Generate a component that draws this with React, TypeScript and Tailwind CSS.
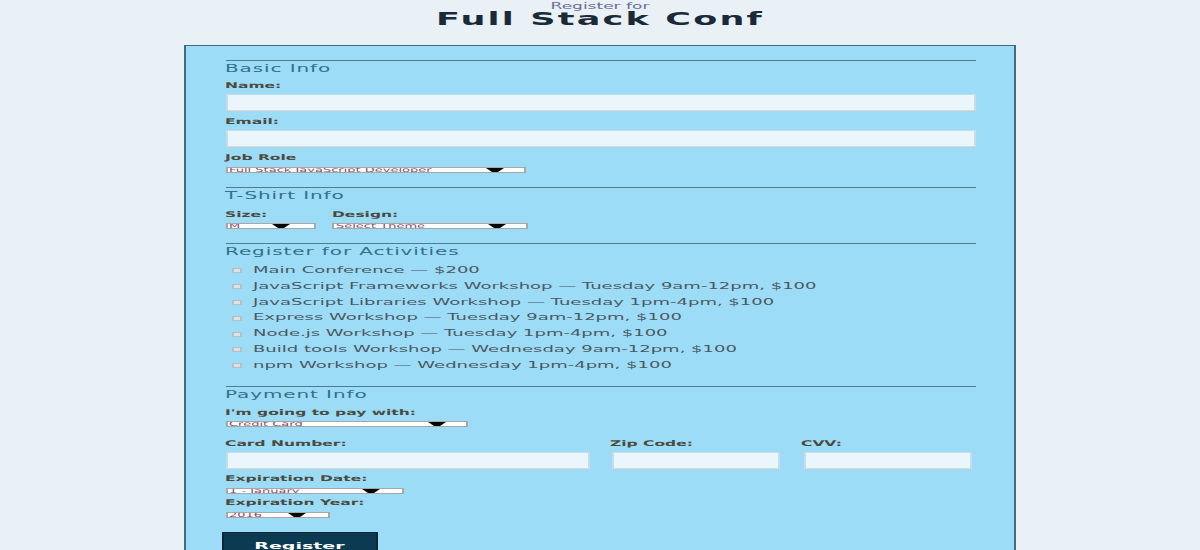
import React from "react";

const activities = [
  "Main Conference — $200",
  "JavaScript Frameworks Workshop — Tuesday 9am-12pm, $100",
  "JavaScript Libraries Workshop — Tuesday 1pm-4pm, $100",
  "Express Workshop — Tuesday 9am-12pm, $100",
  "Node.js Workshop — Tuesday 1pm-4pm, $100",
  "Build tools Workshop — Wednesday 9am-12pm, $100",
  "npm Workshop — Wednesday 1pm-4pm, $100",
];

const Legend = ({ children }: { children: React.ReactNode }) => (
  <div className="border-t border-[#4f7d8f]">
    <div className="mt-[3.5px] h-[10px] text-[10px] leading-[10px] tracking-[0.45px] text-[#35708a]">
      {children}
    </div>
  </div>
);

const Label = ({ children, className = "" }: { children: React.ReactNode; className?: string }) => (
  <div className={`h-[8px] whitespace-nowrap text-[7.75px] font-bold leading-[8px] text-[#4a4a3e] ${className}`}>
    {children}
  </div>
);

const TextInput = ({ className = "" }: { className?: string }) => (
  <div className={`h-[17px] border border-[#c6dde7] bg-[#eaf6fc] shadow-[0_1px_0_#b9d3de] ${className}`} />
);

// tiny native-looking select: white box, clipped text, black arrow
const Select = ({ text, className = "", arrowClass = "mr-[10px]" }: { text: string; className?: string; arrowClass?: string }) => (
  <div className={`flex h-[6px] items-start overflow-hidden border border-[#a7a7a7] bg-white ${className}`}>
    <span className="mt-[-1px] whitespace-nowrap pl-[1px] text-[6.5px] leading-[6px] text-[#8b4a6b]">{text}</span>
    <svg viewBox="0 0 9 6" className={`ml-auto h-[6px] w-[9px] shrink-0 ${arrowClass}`}>
      <polygon points="0,0 9,0 4.5,6" fill="#000" />
    </svg>
  </div>
);

export default function App() {
  return (
    <div className="h-[550px] w-[1200px] overflow-hidden bg-[#e9f0f6]">
      <div className="w-[600px] origin-top-left scale-x-200 font-['DejaVu_Sans',sans-serif]">
        {/* header */}
        <div className="pt-[1.7px] text-center">
          <div className="h-[8.5px] text-[8.5px] leading-[8.5px] text-[#6a6e9c]">Register for</div>
          <h1 className="mt-[0.5px] h-[17.5px] text-[17.5px] font-bold leading-[17.5px] tracking-[1.1px] text-[#1b2a38]">
            Full Stack Conf
          </h1>
        </div>

        {/* form card */}
        <form className="mx-auto mt-[16.8px] h-[520px] w-[416px] border-t border-x-[1.5px] border-[#3e6c80] bg-[#9ddcf6] px-[19.5px] pt-[14px]">
          {/* Basic Info */}
          <Legend>Basic Info</Legend>
          <Label className="mt-[7.7px]">Name:</Label>
          <TextInput className="mt-[4px]" />
          <Label className="mt-[7px]">Email:</Label>
          <TextInput className="mt-[4px]" />
          <Label className="mt-[7px]">Job Role</Label>
          <Select className="mt-[4.5px] w-[150.5px]" text="Full Stack JavaScript Developer" />

          {/* T-Shirt Info */}
          <div className="mt-[14.3px]">
            <Legend>T-Shirt Info</Legend>
          </div>
          <div className="mt-[9.1px] flex">
            <div className="w-[53.5px]">
              <Label>Size:</Label>
              <Select className="mt-[4.7px] w-[45.5px]" text="M" arrowClass="mr-[12px]" />
            </div>
            <div>
              <Label>Design:</Label>
              <Select className="mt-[4.7px] w-[97.7px]" text="Select Theme" />
            </div>
          </div>

          {/* Activities */}
          <div className="mt-[13.4px]">
            <Legend>Register for Activities</Legend>
          </div>
          <div className="mt-[5.8px]">
            {activities.map((a) => (
              <div key={a} className="flex h-[15.83px] items-center">
                <span className="ml-[3px] h-[5px] w-[5px] shrink-0 border-[0.5px] border-[#b7bec4] bg-[#dde1e4]" />
                <span className="ml-[6px] whitespace-nowrap text-[9px] leading-[15.83px] text-[#4a5962]">{a}</span>
              </div>
            ))}
          </div>

          {/* Payment Info */}
          <div className="mt-[12.2px]">
            <Legend>Payment Info</Legend>
          </div>
          <Label className="mt-[8.4px]">I'm going to pay with:</Label>
          <Select className="mt-[4.6px] w-[121px]" text="Credit Card" />

          <div className="mt-[12.1px] grid grid-cols-[182px_84px_84px] gap-x-[11.5px]">
            <div>
              <Label>Card Number:</Label>
              <TextInput className="mt-[4.1px]" />
            </div>
            <div>
              <Label className="-ml-[1px]">Zip Code:</Label>
              <TextInput className="mt-[4.1px]" />
            </div>
            <div>
              <Label className="-ml-[1px]">CVV:</Label>
              <TextInput className="mt-[4.1px]" />
            </div>
          </div>

          <Label className="mt-[6.6px]">Expiration Date:</Label>
          <Select className="mt-[4.4px] w-[89px]" text="1 - January" arrowClass="mr-[11px]" />
          <Label className="mt-[5.6px]">Expiration Year:</Label>
          <Select className="mt-[4.4px] w-[52px]" text="2016" arrowClass="mr-[11px]" />

          <button
            type="button"
            className="mt-[14.7px] -ml-[2px] block h-[24px] w-[78.5px] border border-[#0a2533] bg-[#0c3b51] pt-[3.5px] text-center text-[9.5px] font-bold leading-[9.5px] text-white"
          >
            Register
          </button>
        </form>
      </div>
    </div>
  );
}
